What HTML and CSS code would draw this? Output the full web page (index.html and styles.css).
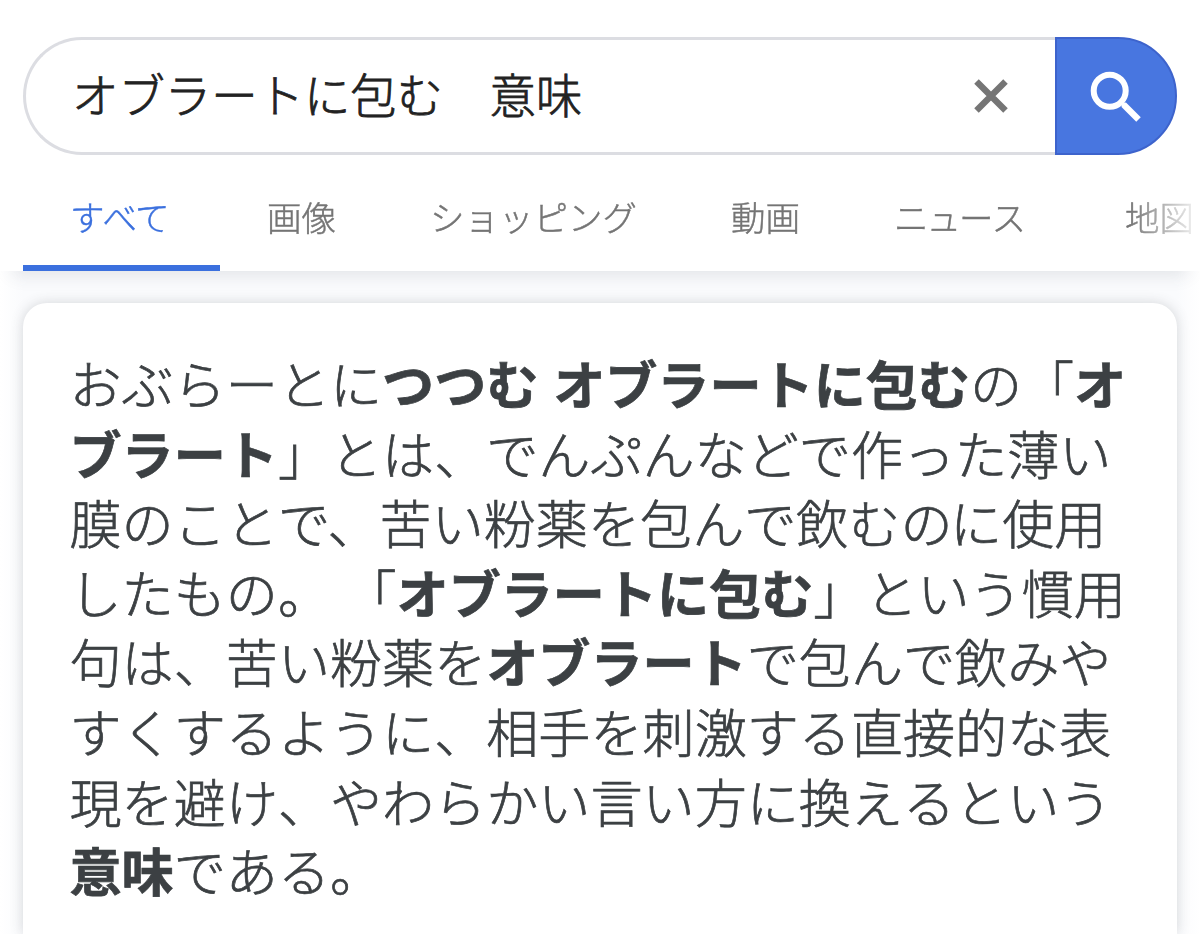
FILE: index.html
```html
<!DOCTYPE html>
<html lang="ja">
<head>
<meta charset="utf-8">
<title>オブラートに包む　意味</title>
<link rel="stylesheet" href="styles.css">
</head>
<body>
<header class="header">
  <form class="search">
    <div class="search-field">
      <span class="query">オブラートに包む　意味</span>
      <svg class="clear" viewBox="0 0 34 34"><path d="M2.5 2.5 31.5 31.5M31.5 2.5 2.5 31.5"/></svg>
    </div>
    <div class="search-button">
      <svg class="glass" viewBox="0 0 52 52"><circle cx="19.7" cy="19.7" r="16"/><path class="handle" d="M33.5 33.5 48.5 48.5"/><path class="neck" d="M30.5 30.5 35.5 35.5"/></svg>
    </div>
  </form>
  <nav class="tabs">
    <a class="tab tab-active"><span class="kana">すべて</span></a>
    <a class="tab">画像</a>
    <a class="tab">ショッピング</a>
    <a class="tab">動画</a>
    <a class="tab"><span class="kana">ニュース</span></a>
    <a class="tab">地図</a>
  </nav>
</header>
<main class="results">
  <article class="card">
    <p class="line">おぶらーとに<b>つつむ オブラートに包む</b>の「<b>オ</b></p>
    <p class="line"><b>ブラート</b>」とは、でんぷんなどで作った薄い</p>
    <p class="line">膜のこと<span class="tight">で</span>、苦い粉薬を包んで飲む<span class="tight">の</span>に使用</p>
    <p class="line">したもの。 「<b>オブラートに包む</b>」という慣用</p>
    <p class="line">句は、苦い粉薬を<b>オブラート</b>で包んで飲みや</p>
    <p class="line">すくするように、相手を刺激する直接的な表</p>
    <p class="line">現を避け、やわらかい言い方に換えるという</p>
    <p class="line"><b>意味</b>である。</p>
  </article>
</main>
</body>
</html>
```
FILE: styles.css
```css
* { box-sizing: border-box; }

body {
  margin: 0;
  height: 934px;
  overflow: hidden;
  display: flex;
  flex-direction: column;
  background: #fff;
  font-family: "Noto Sans CJK JP", sans-serif;
  font-weight: 300;
  font-kerning: none;
}

.header {
  position: relative;
  z-index: 1;
  flex: none;
  height: 271px;
  padding-top: 37px;
  background: #fff;
}

.search {
  display: flex;
  height: 118px;
  margin: 0 23px;
}

.search-field {
  flex: 1;
  display: flex;
  align-items: center;
  justify-content: space-between;
  padding: 0 47px 0 46px;
  border: 3px solid #dcdde2;
  border-right: 0;
  border-radius: 60px 0 0 60px;
}

.query {
  padding-bottom: 7px;
  font-size: 46.4px;
  line-height: 60px;
  color: #222;
  white-space: nowrap;
  -webkit-text-stroke: .8px #222;
}

.clear {
  width: 34px;
  height: 34px;
  fill: none;
  stroke: #757575;
  stroke-width: 6.4;
}

.search-button {
  width: 122px;
  padding: 32px 0 0 32.5px;
  border: 2px solid #3d63cc;
  border-radius: 0 60px 60px 0;
  background: #4876e0;
}

.glass {
  display: block;
  width: 52px;
  height: 52px;
  fill: none;
  stroke: #fff;
}

.glass circle { stroke-width: 6; }
.handle { stroke-width: 6.4; }
.neck { stroke-width: 4; }

.tabs {
  display: flex;
  height: 116px;
  margin-right: 7px;
  padding-left: 23px;
  overflow: hidden;
  mask-image: linear-gradient(to right, #000 1130px, transparent 1203px);
}

.tab {
  flex: none;
  height: 116px;
  padding: 36px 47px 0;
  font-size: 34.5px;
  line-height: 50px;
  color: #757575;
  white-space: nowrap;
  -webkit-text-stroke: .45px currentColor;
}

.tab-active {
  width: 197px;
  color: #3b70de;
  border-bottom: 6px solid #3b70de;
}

.kana {
  display: inline-block;
  margin-right: 7px;
  letter-spacing: -2px;
}

.results {
  flex: 1;
  padding: 32px 23px 0;
  overflow: hidden;
  background: linear-gradient(to right, #fff, #fafbfd 23px, #fafbfd 1177px, #fff);
}

.results::before {
  content: "";
  position: absolute;
  top: 261px;
  left: 16px;
  right: 16px;
  height: 10px;
  box-shadow: 0 0 18px 3px rgba(60, 64, 80, .15);
}

.card {
  position: relative;
  height: 100%;
  padding: 45px 0 0 46.5px;
  border-radius: 24px 24px 0 0;
  background: #fff;
  box-shadow: 0 0 13px rgba(60, 64, 70, .2);
}

.line {
  margin: 0;
  font-size: 52.1px;
  line-height: 69.6px;
  color: #3c4043;
  white-space: nowrap;
  word-spacing: 3px;
  -webkit-text-stroke: .7px #3c4043;
}

.line b { font-weight: 700; }

.tight { letter-spacing: -2.5px; }
```
